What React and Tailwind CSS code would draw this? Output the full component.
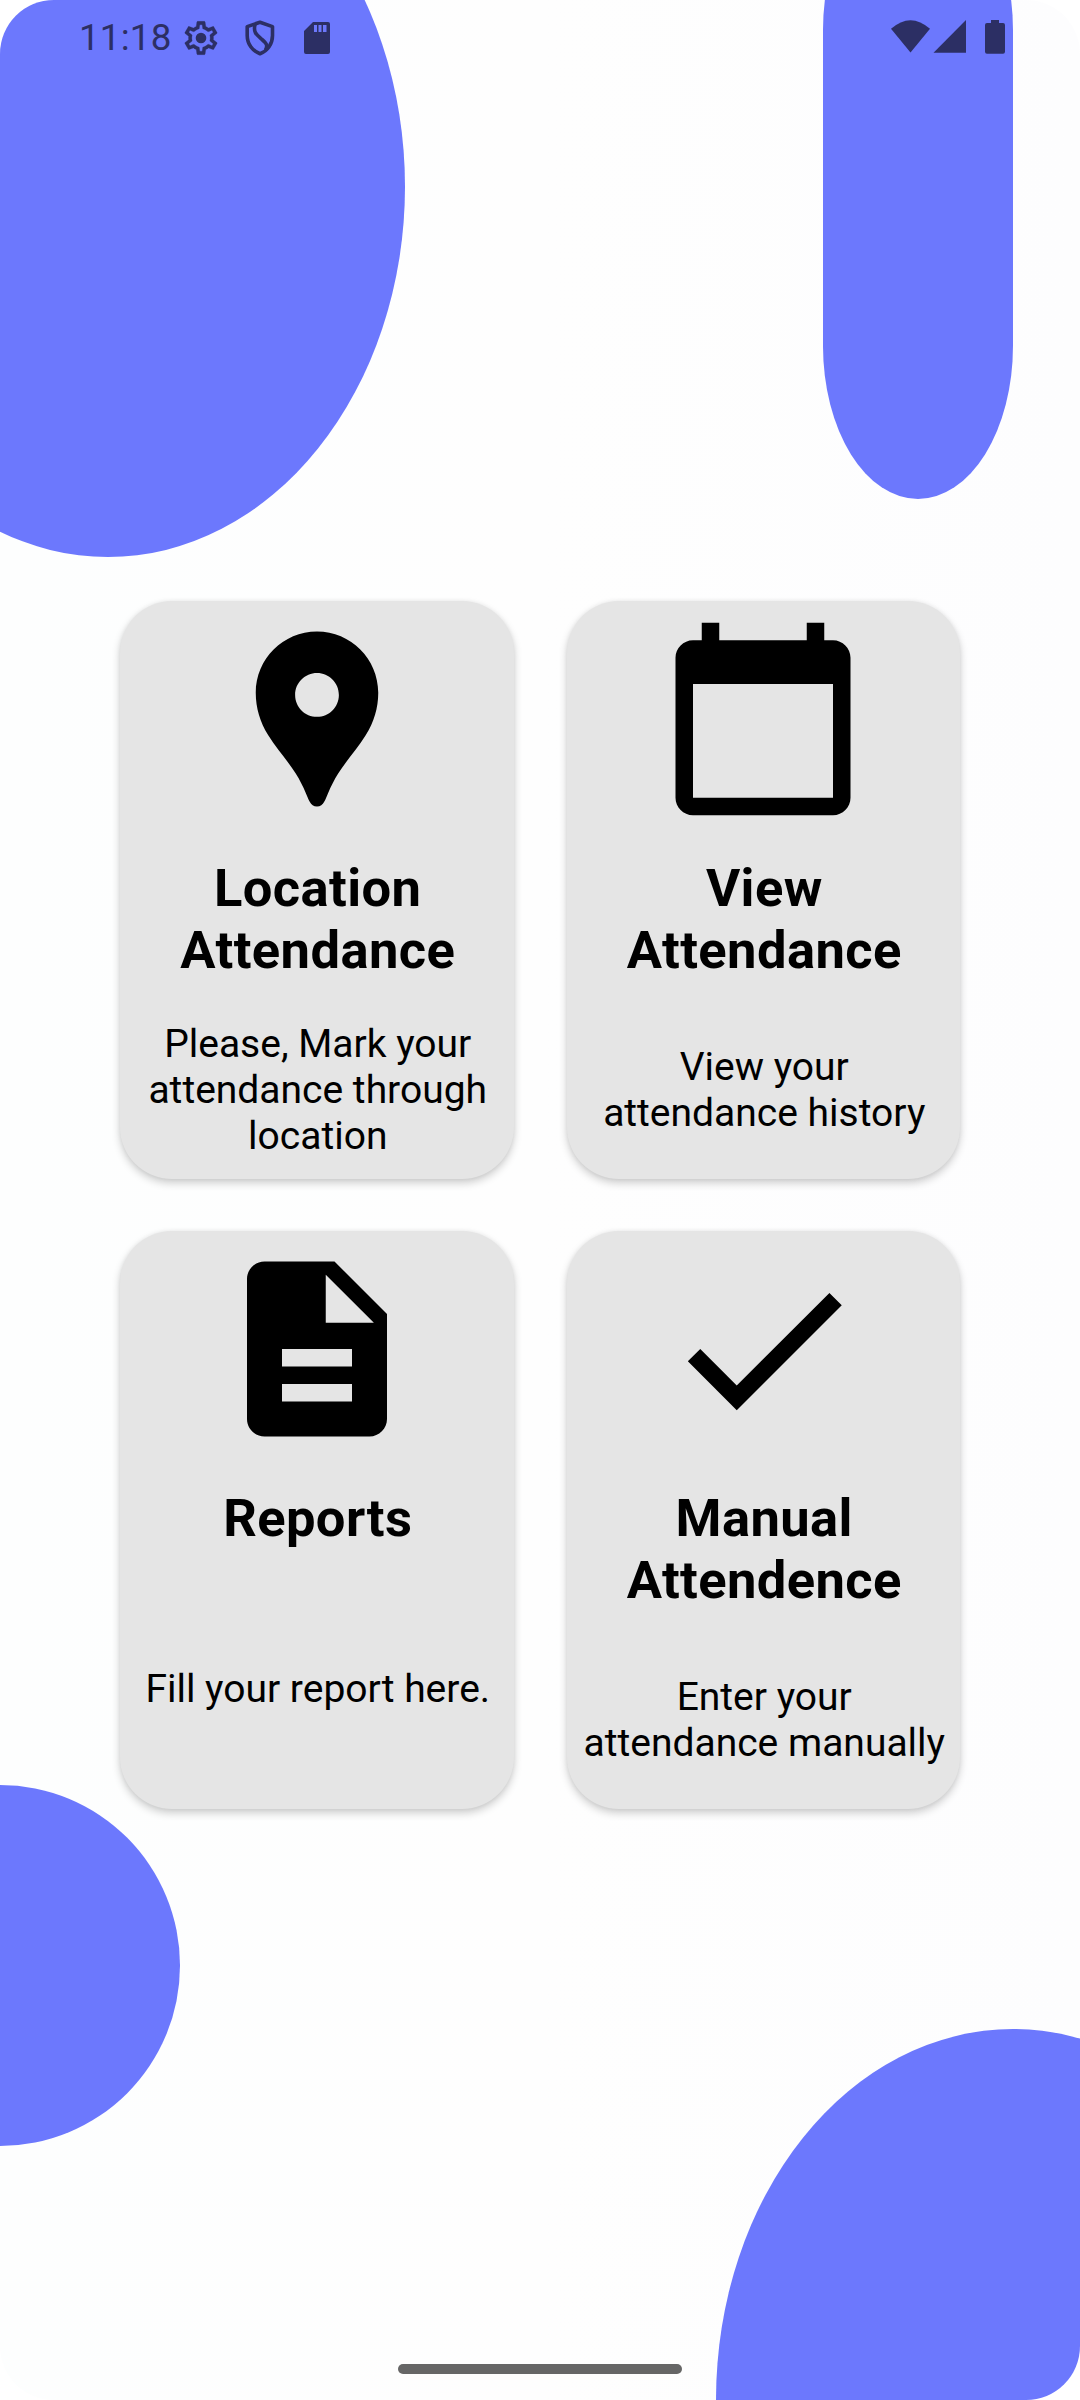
import React from "react";

const paths = {
  pin: "M12 2C8.13 2 5 5.13 5 9c0 1.74.5 3.37 1.41 4.84.95 1.54 2.2 2.86 3.16 4.4.47.75.81 1.45 1.17 2.26.26.55.47 1.5 1.26 1.5s1-.95 1.25-1.5c.37-.81.7-1.51 1.17-2.26.96-1.53 2.21-2.85 3.16-4.4C18.5 12.37 19 10.74 19 9c0-3.87-3.13-7-7-7zm0 9.75c-1.38 0-2.5-1.12-2.5-2.5s1.12-2.5 2.5-2.5 2.5 1.12 2.5 2.5-1.12 2.5-2.5 2.5z",
  calendar: "M20 3h-1V1h-2v2H7V1H5v2H4c-1.1 0-2 .9-2 2v16c0 1.1.9 2 2 2h16c1.1 0 2-.9 2-2V5c0-1.1-.9-2-2-2zm0 18H4V8h16v13z",
  report: "M14 2H6c-1.1 0-2 .9-2 2v16c0 1.1.9 2 2 2h12c1.1 0 2-.9 2-2V8l-6-6zm2 16H8v-2h8v2zm0-4H8v-2h8v2zm-3-5V3.5L18.5 9H13z",
  check: "M9 16.17L4.83 12l-1.42 1.41L9 19 21 7l-1.41-1.41z",
};

const cards = [
  { icon: paths.pin, title: ["Location", "Attendance"], body: ["Please, Mark your", "attendance through", "location"], gap: "mt-[40px]" },
  { icon: paths.calendar, title: ["View", "Attendance"], body: ["View your", "attendance history"], gap: "mt-[63px]" },
  { icon: paths.report, title: ["Reports"], body: ["Fill your report here."], gap: "mt-[117px]" },
  { icon: paths.check, title: ["Manual", "Attendence"], body: ["Enter your", "attendance manually"], gap: "mt-[63px]" },
];

function Lines({ items }) {
  return items.map((t) => (
    <span key={t} className="block whitespace-nowrap">{t}</span>
  ));
}

function Card({ icon, title, body, gap }) {
  return (
    <button className="flex h-[578px] flex-col items-center rounded-[52px] bg-[#e5e5e5] pt-[13px] text-center text-black shadow-[0_4px_8px_rgba(0,0,0,0.2),0_0_4px_rgba(0,0,0,0.05)]">
      <svg viewBox="0 0 24 24" className="size-[210px] shrink-0" fill="currentColor">
        <path d={icon} />
      </svg>
      <h2 className="mt-[33px] pl-[2px] text-[52.5px] leading-[62px] font-bold tracking-[0.4px]"><Lines items={title} /></h2>
      <p className={"pl-[2px] text-[39px] leading-[46px] " + gap}><Lines items={body} /></p>
    </button>
  );
}

function StatusBar() {
  return (
    <header className="relative flex h-[74px] items-center pl-[79px] text-[#2c2f64]">
      <span className="w-[102px] text-[36.75px] leading-[43px] tracking-[0.2px]">11:18</span>
      <svg viewBox="0 0 24 24" className="mt-[2px] size-[40px] shrink-0" fill="currentColor">
        <path stroke="currentColor" strokeWidth="0.15" d="M19.43 12.98c.04-.32.07-.64.07-.98 0-.34-.03-.66-.07-.98l2.11-1.65c.19-.15.24-.42.12-.64l-2-3.46c-.09-.16-.26-.25-.44-.25-.06 0-.12.01-.17.03l-2.49 1c-.52-.4-1.08-.73-1.69-.98l-.38-2.65C14.46 2.18 14.25 2 14 2h-4c-.25 0-.46.18-.49.42l-.38 2.65c-.61.25-1.17.59-1.69.98l-2.49-1c-.06-.02-.12-.03-.18-.03-.17 0-.34.09-.43.25l-2 3.46c-.13.22-.07.49.12.64l2.11 1.65c-.04.32-.07.65-.07.98 0 .33.03.66.07.98l-2.11 1.65c-.19.15-.24.42-.12.64l2 3.46c.09.16.26.25.44.25.06 0 .12-.01.17-.03l2.49-1c.52.4 1.08.73 1.69.98l.38 2.65c.03.24.24.42.49.42h4c.25 0 .46-.18.49-.42l.38-2.65c.61-.25 1.17-.59 1.69-.98l2.49 1c.06.02.12.03.18.03.17 0 .34-.09.43-.25l2-3.46c.12-.22.07-.49-.12-.64l-2.11-1.65zm-1.98-1.71c.04.31.05.52.05.73s-.02.43-.05.73l-.14 1.13.89.7 1.08.84-.7 1.21-1.27-.51-1.04-.42-.9.68c-.43.32-.84.56-1.25.73l-1.06.43-.16 1.13-.2 1.35h-1.4l-.19-1.35-.16-1.13-1.06-.43c-.43-.18-.83-.41-1.23-.71l-.91-.7-1.06.43-1.27.51-.7-1.21 1.08-.84.89-.7-.14-1.13c-.03-.31-.05-.54-.05-.74s.02-.43.05-.73l.14-1.13-.89-.7-1.08-.84.7-1.21 1.27.51 1.04.42.9-.68c.43-.32.84-.56 1.25-.73l1.06-.43.16-1.13.2-1.35h1.39l.19 1.35.16 1.13 1.06.43c.43.18.83.41 1.23.71l.91.7 1.06-.43 1.27-.51.7 1.21-1.07.85-.89.7.14 1.13z" />
        <circle cx="12" cy="12" r="3.2" />
      </svg>
      <svg viewBox="0 0 30 36" className="mt-[2px] ml-[24px] h-[36px] w-[30px] shrink-0" fill="none" stroke="currentColor" strokeWidth="3.6" strokeLinejoin="round">
        <path d="M15 2.2 L27.5 6.6 V15.500 C27.500 24 22.500 31 15 33.800 C7.500 31 2.200 24 2.200 15.500 V6.600 Z" />
        <path d="M10 4.500 C8 13 12 15 17 19.500 C22.500 24 22.500 26 20.500 30" />
      </svg>
      <svg viewBox="0 0 26 32" className="mt-[2px] ml-[29px] h-[32px] w-[26px] shrink-0" fill="currentColor">
        <path fillRule="evenodd" d="M9 0H24Q26 0 26 2V30Q26 32 24 32H2Q0 32 0 30V9ZM10 3V10H13V3ZM14.500 3V10H17.500V3ZM19 3V10H22.500V3Z" />
      </svg>
      <svg viewBox="0 0 114 34" className="ml-auto mr-[75px] h-[34px] w-[114px] shrink-0" fill="currentColor">
        <path d="M0 8.800 Q19.500 -8.500 39 8.800 L19.500 32.500Z" />
        <path d="M42.500 32.700 75 0V32.700Z" />
        <path d="M100 0h8v3h4q2 0 2 2v26.700q0 2-2 2H96q-2 0-2-2V5q0-2 2-2h4z" />
      </svg>
    </header>
  );
}

export default function App() {
  return (
    <div className="h-[2400px] w-[1080px] bg-white font-['Roboto',sans-serif]">
      <div className="relative flex h-full flex-col overflow-hidden rounded-[54px] bg-linear-to-r from-[#fdfefe] via-[#fefefe] to-[#fdfdfe]">
        <div className="absolute top-[-184px] left-[-189px] h-[741px] w-[594px] rounded-[50%] bg-[#6c78fd]" />
        <div className="absolute top-[-123px] left-[823px] h-[622px] w-[190px] rounded-[95px/153px] bg-[#6c78fd]" />
        <div className="absolute top-[1785px] left-[-180px] h-[361px] w-[360px] rounded-[50%] bg-[#6c78fd]" />
        <div className="absolute top-[2029px] left-[716px] h-[742px] w-[594px] rounded-[50%] bg-[#6c78fd]" />
        <StatusBar />
        <main className="relative mt-[527px] grid grid-cols-2 gap-x-[53px] gap-y-[52px] px-[120px]">
          {cards.map((c) => <Card key={c.title.join(" ")} {...c} />)}
        </main>
        <div className="relative mx-auto mt-auto mb-[26px] h-[10px] w-[284px] rounded-full bg-[#666]" />
      </div>
    </div>
  );
}
